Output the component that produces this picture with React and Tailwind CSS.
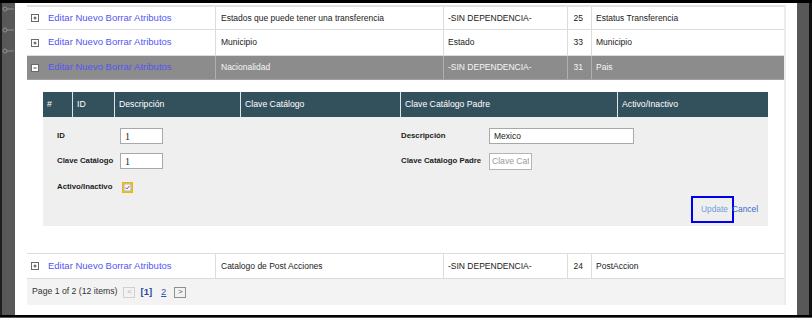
import clsx from 'clsx'

const sans = "font-['Liberation_Sans',Arial,sans-serif]"

function ToggleIcon({ open }) {
  return (
    <svg width="8" height="8" viewBox="0 0 8 8" className="shrink-0">
      <rect x="0.5" y="0.5" width="7" height="7" fill="#fff" stroke="#6a6a6a" />
      <line x1="2.5" y1="4" x2="5.5" y2="4" stroke="#333" strokeWidth="0.9" />
      {!open && <line x1="4" y1="2.5" x2="4" y2="5.5" stroke="#333" strokeWidth="0.9" />}
    </svg>
  )
}

function GridRow({ h, desc, dep, num, name, selected, open }) {
  const line = selected ? 'border-[#b0b0b0]' : 'border-[#dcdcdc]'
  return (
    <div
      className={clsx(
        'flex border-b text-[8.5px]',
        h,
        selected ? 'bg-[#8c8c8c] text-[#f6f6f6] border-[#a0a0a0]' : 'bg-white text-[#1a1a1a] border-[#dcdcdc]'
      )}
    >
      <div className={clsx('w-[189px] flex items-center pl-[4px] border-r', line)}>
        <ToggleIcon open={open} />
        <span className="ml-[9px] text-[9.5px] text-[#5555f5]">Editar Nuevo Borrar Atributos</span>
      </div>
      <div className={clsx('w-[228px] flex items-center pl-[5px] border-r', line)}>{desc}</div>
      <div className={clsx('w-[124px] flex items-center pl-[4px] border-r', line)}>{dep}</div>
      <div className={clsx('w-[24px] flex items-center justify-end pr-[8px] border-r', line)}>{num}</div>
      <div className="flex-1 flex items-center pl-[4px]">{name}</div>
    </div>
  )
}

function CheckBox() {
  return (
    <svg width="11" height="11" viewBox="0 0 11 11">
      <rect x="0.75" y="0.75" width="9.5" height="9.5" fill="#eaeaea" stroke="#f2b600" strokeWidth="1.5" />
      <rect x="2" y="2" width="7" height="7" fill="#f6f6f6" stroke="#8a8a8a" strokeWidth="0.6" />
      <path d="M3.4 5.6 L4.8 7 L7.6 3.9" fill="none" stroke="#555" strokeWidth="0.9" />
    </svg>
  )
}

function Ticks() {
  return (
    <svg width="13" height="60" viewBox="0 0 13 60" className="absolute left-0 top-0">
      {[6, 27, 48].map((y) => (
        <g key={y} stroke="#9c9c9c" fill="none" strokeWidth="0.8">
          <circle cx="3" cy={y} r="2" />
          <line x1="5" y1={y} x2="12" y2={y} />
        </g>
      ))}
    </svg>
  )
}

export default function App() {
  const header = ['#', 'ID', 'Descripción', 'Clave Catálogo', 'Clave Catálogo Padre', 'Activo/Inactivo']
  const headerW = ['w-[30px]', 'w-[42px]', 'w-[126px]', 'w-[160px]', 'w-[217px]', 'flex-1']

  return (
    <div className={clsx('w-[812px] h-[318px] bg-[#585858] flex flex-col overflow-hidden', sans)}>
      <div className="h-[3px] bg-black shrink-0" />
      <div className="flex h-[312px]">
        {/* left strip */}
        <div className="relative w-[15px] border-l-2 border-[#1e1e1e] bg-[#585858]">
          <Ticks />
        </div>

        {/* white panel */}
        <div className="w-[782px] bg-white pl-[12px] pt-[2px]">
          <div className="w-[759px] border-t-2 border-[#e2e2e2] border-r-2 border-r-[#ececec]">
            <GridRow
              h="h-[23px]"
              desc="Estados que puede tener una transferencia"
              dep="-SIN DEPENDENCIA-"
              num="25"
              name="Estatus Transferencia"
            />
            <GridRow h="h-[26px]" desc="Municipio" dep="Estado" num="33" name="Municipio" />
            <GridRow
              h="h-[24px]"
              desc="Nacionalidad"
              dep="-SIN DEPENDENCIA-"
              num="31"
              name="Pais"
              selected
              open
            />

            {/* detail row */}
            <div className="h-[174px] border-b border-[#dcdcdc] pt-[12px] px-[16px]">
              <div className="flex h-[25px] bg-[#33515d] text-white text-[8.7px]">
                {header.map((t, i) => (
                  <div
                    key={t}
                    className={clsx(
                      'flex items-center pl-[4px]',
                      headerW[i],
                      i < header.length - 1 && 'border-r border-[#dfe6e9]'
                    )}
                  >
                    {t}
                  </div>
                ))}
              </div>

              <div className="h-[109px] bg-[#efefef] pl-[14px] pt-[11px] pr-[10px] text-[#1c1c1c]">
                <div className="flex h-[16px] items-center">
                  <div className="flex w-[344px] items-center">
                    <span className="w-[63px] font-bold text-[7.8px]">ID</span>
                    <input
                      readOnly
                      defaultValue="1"
                      className="w-[43px] h-[16px] border border-[#a9a9a9] bg-white px-[4px] text-[10px] text-[#222] font-['Liberation_Serif','Times_New_Roman',serif] outline-none"
                    />
                  </div>
                  <span className="w-[88px] font-bold text-[7.8px]">Descripción</span>
                  <input
                    readOnly
                    defaultValue="Mexico"
                    className="w-[145px] h-[16px] border border-[#a9a9a9] bg-white px-[4px] text-[8.5px] text-[#222] outline-none"
                  />
                </div>

                <div className="flex h-[16px] items-center mt-[9px]">
                  <div className="flex w-[344px] items-center">
                    <span className="w-[63px] font-bold text-[7.8px]">Clave Catálogo</span>
                    <input
                      readOnly
                      defaultValue="1"
                      className="w-[43px] h-[16px] border border-[#a9a9a9] bg-white px-[4px] text-[10px] text-[#222] font-['Liberation_Serif','Times_New_Roman',serif] outline-none"
                    />
                  </div>
                  <span className="w-[88px] font-bold text-[7.8px]">Clave Catálogo Padre</span>
                  <input
                    readOnly
                    placeholder="Clave Cat"
                    className="w-[43px] h-[17px] border border-[#b5b5b5] bg-white px-[2px] text-[8.6px] placeholder:text-[#9a9a9a] outline-none"
                  />
                </div>

                <div className="flex h-[16px] items-center mt-[10px]">
                  <span className="w-[65px] font-bold text-[7.8px]">Activo/Inactivo</span>
                  <CheckBox />
                </div>

                <div className="flex justify-end items-center mt-[1px] text-[8.4px]">
                  <div className="w-[43px] h-[27px] border-2 border-[#0000f0] flex items-center pl-[8px] text-[#6f9de0]">
                    Update
                  </div>
                  <span className="-ml-[2px] text-[#3a6ac8]">Cancel</span>
                </div>
              </div>
            </div>

            <GridRow
              h="h-[25px]"
              desc="Catalogo de Post Acciones"
              dep="-SIN DEPENDENCIA-"
              num="24"
              name="PostAccion"
            />

            {/* pager */}
            <div className="h-[26px] bg-[#f3f3f3] flex items-center pl-[5px] text-[8.7px] text-[#333]">
              <span>Page 1 of 2 (12 items)</span>
              <span className="ml-[6px] w-[12px] h-[11px] border border-[#cfcfcf] flex items-center justify-center text-[8px] text-[#b0b0b0] leading-none">
                &lt;
              </span>
              <span className="ml-[5px] font-bold text-[9.5px] text-[#2a4a9c]">[1]</span>
              <span className="ml-[9px] text-[9.5px] text-[#3355aa] underline">2</span>
              <span className="ml-[8px] w-[12px] h-[11px] border border-[#8f8f8f] flex items-center justify-center text-[8px] text-[#555] leading-none">
                &gt;
              </span>
            </div>
          </div>
        </div>

        {/* right strip */}
        <div className="w-[15px] bg-[#585858] border-r-[3px] border-[#111]" />
      </div>
      <div className="h-[2px] bg-black shrink-0" />
    </div>
  )
}
